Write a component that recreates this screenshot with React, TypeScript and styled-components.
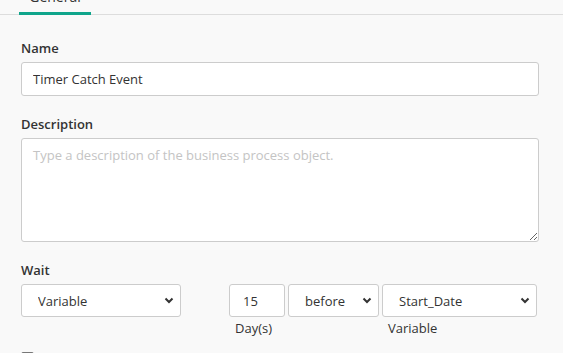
import React from 'react';
import styled, { createGlobalStyle } from 'styled-components';

const GlobalStyle = createGlobalStyle`
  html, body {
    margin: 0;
    padding: 0;
    background: #f9f9f9;
    font-family: 'Open Sans', 'Liberation Sans', sans-serif;
    font-size: 13px;
    color: #333;
    overflow: hidden;
  }
`;

const Page = styled.div`
  display: flex;
  flex-direction: column;
  height: 353px;
`;

const TabBar = styled.div`
  display: flex;
  margin-top: -13px;
  padding-left: 19px;
  border-bottom: 1px solid #dddddd;
`;

const Tab = styled.div<{ $active?: boolean }>`
  width: 72px;
  box-sizing: border-box;
  text-align: center;
  font-size: 14px;
  line-height: 19px;
  padding-bottom: 6px;
  color: #333;
  border-bottom: 3px solid ${(p) => (p.$active ? '#0fa58b' : 'transparent')};
  margin-bottom: -1px;
`;

const Form = styled.div`
  display: flex;
  flex-direction: column;
  padding: 24px 24px 0 21px;
  gap: 19px;
`;

const Field = styled.div`
  display: flex;
  flex-direction: column;
  gap: 5px;
`;

const Label = styled.label`
  font-weight: 600;
  font-size: 13px;
  line-height: 18px;
  color: #333;
`;

const TextInput = styled.input`
  box-sizing: border-box;
  height: 34px;
  width: 100%;
  border: 1px solid #cccccc;
  border-radius: 3px;
  background: #fff;
  padding: 0 11px;
  font-family: inherit;
  font-size: 13px;
  color: #333;
  outline: none;
`;

const TextArea = styled.textarea`
  box-sizing: border-box;
  height: 104px;
  width: 100%;
  border: 1px solid #cccccc;
  border-radius: 3px;
  background: #fff;
  padding: 7px 11px;
  font-family: inherit;
  font-size: 13px;
  color: #333;
  outline: none;
  display: block;

  &::placeholder {
    color: #c4c4c4;
  }
`;

const WaitRow = styled.div`
  display: flex;
  align-items: flex-start;
`;

const Column = styled.div<{ $w: number; $ml?: number }>`
  display: flex;
  flex-direction: column;
  width: ${(p) => p.$w}px;
  margin-left: ${(p) => p.$ml ?? 0}px;
`;

const Hint = styled.span`
  font-size: 13px;
  line-height: 18px;
  padding: 2px 0 0 6px;
  color: #333;
`;

const SelectBox = styled.div`
  position: relative;
  width: 100%;
`;

const Select = styled.select`
  appearance: none;
  -webkit-appearance: none;
  box-sizing: border-box;
  width: 100%;
  height: 33px;
  border: 1px solid #cccccc;
  border-radius: 3px;
  background: #fff;
  padding: 0 24px 0 16px;
  font-family: inherit;
  font-size: 13px;
  color: #333;
  outline: none;
`;

const Chevron = styled.svg`
  position: absolute;
  right: 7px;
  top: 13px;
  width: 10px;
  height: 7px;
  pointer-events: none;
`;

const NumberInput = styled(TextInput)`
  height: 33px;
  padding: 0 13px;
`;

const CheckRow = styled.div`
  display: flex;
  align-items: flex-start;
  gap: 6px;
  margin-top: -7px;
  font-size: 13px;
  line-height: 18px;
`;

const Check = styled.span`
  flex: none;
  width: 11px;
  height: 11px;
  margin-top: 3px;
  border: 1px solid #777;
  border-radius: 2px;
  background: #fff;
`;

const Dropdown = ({ value, options }: { value: string; options: string[] }) => (
  <SelectBox>
    <Select defaultValue={value}>
      {options.map((o) => (
        <option key={o}>{o}</option>
      ))}
    </Select>
    <Chevron viewBox="0 0 10 7">
      <path d="M1.5 1.5 L5 5 L8.5 1.5" fill="none" stroke="#333" strokeWidth="2" />
    </Chevron>
  </SelectBox>
);

export default function App() {
  return (
    <>
      <GlobalStyle />
      <Page>
        <TabBar>
          <Tab $active>General</Tab>
        </TabBar>
        <Form>
          <Field>
            <Label>Name</Label>
            <TextInput defaultValue="Timer Catch Event" />
          </Field>
          <Field>
            <Label>Description</Label>
            <TextArea placeholder="Type a description of the business process object." />
          </Field>
          <Field>
            <Label>Wait</Label>
            <WaitRow>
              <Column $w={160}>
                <Dropdown value="Variable" options={['Variable', 'Duration', 'Date']} />
              </Column>
              <Column $w={56} $ml={48}>
                <NumberInput defaultValue="15" />
                <Hint>Day(s)</Hint>
              </Column>
              <Column $w={91} $ml={3}>
                <Dropdown value="before" options={['before', 'after']} />
              </Column>
              <Column $w={155} $ml={3}>
                <Dropdown value="Start_Date" options={['Start_Date', 'End_Date']} />
                <Hint>Variable</Hint>
              </Column>
            </WaitRow>
          </Field>
          <CheckRow>
            <Check />
            <span>Use business calendar</span>
          </CheckRow>
        </Form>
      </Page>
    </>
  );
}
